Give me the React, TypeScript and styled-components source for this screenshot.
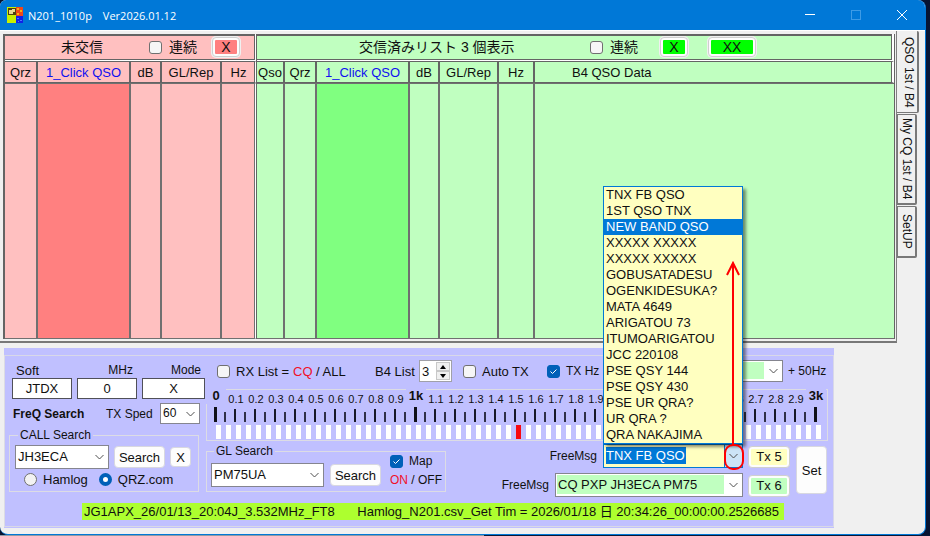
import React, { useState } from "react";
import styled, { createGlobalStyle, css } from "styled-components";

const GlobalStyle = createGlobalStyle`
  * { box-sizing: border-box; }
  html, body { margin: 0; padding: 0; }
  body {
    background: linear-gradient(to right, #8f99a5 0 52%, #0a1836 52%);
    font-family: "Liberation Sans", "Noto Sans CJK JP", sans-serif;
    font-size: 13px;
    color: #101010;
    overflow: hidden;
  }
  button, input, select { font: inherit; color: inherit; margin: 0; }
`;

const Desktop = styled.div`
  background: linear-gradient(to bottom, #071330, #0a2050 50%, #071330);
  padding-right: 4px;
`;

const Window = styled.div`
  background: #f0f0f0;
  border-right: 1px solid #0078d7;
  border-bottom: 1px solid #0078d7;
  border-radius: 6px 8px 8px 8px;
  overflow: hidden;
  padding-bottom: 6px;
`;

const TitleBar = styled.header`
  display: flex;
  align-items: center;
  height: 30px;
  padding-left: 7px;
  background: #0078d7;
  color: #fff;
  font: 11px "Open Sans", sans-serif;
`;

const AppName = styled.h1`
  display: flex;
  gap: 11px;
  margin: 0 0 0 5px;
  font: inherit;
`;

const WindowButtons = styled.div`
  display: flex;
  margin-left: auto;
`;

const WindowButton = styled.button`
  display: grid;
  place-items: center;
  width: 46px;
  height: 28px;
  padding: 0;
  border: 0;
  background: none;
`;

const TabControl = styled.div`
  display: flex;
  align-items: flex-start;
  border-top: 1px solid #fff;
`;

const TabPage = styled.section`
  flex: 1;
  min-width: 0;
  padding: 3px 1px 2px 3px;
  border-right: 1px solid #808080;
  border-bottom: 2px solid #787878;
`;

const Lists = styled.div`
  display: flex;
  border-left: 2px solid #646464;
  border-right: 1px solid #646464;
  background: #fff;
`;

const ListPane = styled.div<{ $width?: string }>`
  flex: ${(p) => (p.$width ? `0 0 ${p.$width}` : "1")};
  min-width: 0;
  border-left: ${(p) => (p.$width ? "0" : "1px solid #646464")};
`;

const ListHead = styled.div<{ $columns: string; $tone: string; $gap: number }>`
  display: grid;
  grid-template-columns: ${(p) => p.$columns};
  align-items: center;
  height: 26px;
  margin-right: ${(p) => p.$gap}px;
  padding-bottom: 1px;
  border: solid #646464;
  border-width: 2px 1px 1px 0;
  background: ${(p) => p.$tone};
  font-size: 14px;
  line-height: 20px;
`;

const ListTitle = styled.h2<{ $inset: number }>`
  margin: 0;
  padding-left: ${(p) => p.$inset}px;
  font-size: 14px;
  font-weight: 400;
  white-space: nowrap;
`;

const ListTable = styled.table`
  width: 100%;
  table-layout: fixed;
  border-collapse: separate;
  border-spacing: 0;
  border-top: 1px solid #fff;
`;

const HeadCell = styled.th<{ $link?: boolean; $tone: string; $gap: number }>`
  height: 22px;
  padding: 0;
  border: solid #646464;
  border-width: 1px 2px 1px 0;
  background: ${(p) => p.$tone};
  font-size: 13px;
  font-weight: 400;
  white-space: nowrap;
  color: ${(p) => (p.$link ? "#1010f0" : "#101010")};
  &:last-child {
    border-right: ${(p) => p.$gap}px solid #fff;
    box-shadow: inset -1px 0 #646464;
  }
`;

const DataHead = styled(HeadCell)`
  padding-left: 37px;
  text-align: left;
`;

const BodyCell = styled.td<{ $fill: string; $edge: boolean }>`
  height: 256px;
  padding: 0;
  border: solid #707070;
  border-width: 1px 2px 1px 0;
  background: ${(p) => p.$fill};
  &:last-child {
    border-right: ${(p) => (p.$edge ? "1px solid #fff" : "0")};
    box-shadow: ${(p) => (p.$edge ? "inset -1px 0 #707070" : "none")};
  }
`;

const FrameButton = styled.button<{ $fill: string; $w: number; $h: number }>`
  width: ${(p) => p.$w}px;
  height: ${(p) => p.$h}px;
  padding: 2px;
  border: 1px solid #cfcfcf;
  border-radius: 4px;
  background: linear-gradient(${(p) => p.$fill}, ${(p) => p.$fill}) content-box, #fdfdfd;
  line-height: 14px;
  white-space: nowrap;
`;

const HeadButton = styled(FrameButton)`
  box-shadow: 0 0 0 1px #f0f0f0;
`;

const TabStrip = styled.nav`
  display: flex;
  flex-direction: column;
  width: 28px;
  gap: 1px;
`;

const Tab = styled.button<{ $active?: boolean; $h: number }>`
  width: ${(p) => (p.$active ? 22 : 20)}px;
  height: ${(p) => p.$h}px;
  padding: ${(p) => (p.$active ? "1px 0 0 3px" : "0 0 0 2px")};
  border: solid #787878;
  border-width: ${(p) => (p.$active ? "0 2px 1px 0" : "1px 2px 2px 1px")};
  border-radius: 0 2px 2px 0;
  background: #f0f0f0;
  writing-mode: vertical-rl;
  font-size: 12px;
  line-height: 16px;
  white-space: nowrap;
`;

const CheckLabel = styled.label<{ $gap?: number; $size?: number }>`
  display: flex;
  align-items: center;
  gap: ${(p) => p.$gap ?? 6}px;
  font-size: ${(p) => p.$size ?? 13}px;
  white-space: nowrap;
`;

const Check = styled.input.attrs({ type: "checkbox" })`
  appearance: none;
  flex: none;
  width: 13px;
  height: 13px;
  border: 1px solid #707070;
  border-radius: 3px;
  background: #f6f6f6;
  &:checked {
    border-color: #0060b8;
    background: #0060b8 url("data:image/svg+xml,%3Csvg xmlns='http://www.w3.org/2000/svg' viewBox='0 0 11 11' fill='none' stroke='white'%3E%3Cpath d='M2.5 5.5l2 2 4-4'/%3E%3C/svg%3E");
  }
`;

const Radio = styled.input.attrs({ type: "radio" })`
  appearance: none;
  flex: none;
  width: 13px;
  height: 13px;
  border: 1px solid #707070;
  border-radius: 50%;
  background: #f3f3f3;
  &:checked {
    border: 4px solid #0060b8;
    background: #fff;
  }
`;

const Panel = styled.section`
  margin: 5px 91px 0 4px;
  padding: 7px 0 1px;
  background: #c0c0ff;
`;

const PanelFrame = styled.div`
  border: 1px solid #d8d8e8;
  border-left-color: #dcdce4;
  padding-bottom: 6px;
`;

const Controls = styled.div`
  display: grid;
  grid-template-columns: 200px minmax(0, 1fr);
`;

const Station = styled.div`
  padding: 7px 6px 0 4px;
`;

const FieldRow = styled.div`
  display: grid;
  grid-template-columns: 60px 60px 63px;
  column-gap: 5px;
  padding-left: 3px;
`;

const Field = styled.label<{ $align?: string; $size?: number }>`
  display: flex;
  flex-direction: column;
  font-size: ${(p) => p.$size ?? 12}px;
  line-height: 15px;
  text-align: ${(p) => p.$align ?? "right"};
  span { padding: 0 4px; }
`;

const TextBox = styled.input`
  width: 100%;
  height: 21px;
  padding: 0;
  border: 1px solid #505058;
  background: #fff;
  font-size: 13px;
  text-align: center;
`;

const SpeedRow = styled.div`
  display: grid;
  grid-template-columns: 93px 54px 40px;
  align-items: center;
  margin: 4px 0;
  padding-left: 4px;
  font-size: 12px;
  white-space: nowrap;
`;

const Group = styled.fieldset<{ $pad: string }>`
  margin: 0;
  min-width: 0;
  padding: ${(p) => p.$pad};
  border: 1px solid #dcdce4;
`;

const Legend = styled.legend`
  margin-left: 3px;
  padding: 0 2px;
  font-size: 12px;
  line-height: 14px;
`;

const Row = styled.div<{ $gap?: number; $pad?: string; $end?: boolean }>`
  display: flex;
  align-items: center;
  justify-content: ${(p) => (p.$end ? "flex-end" : "flex-start")};
  gap: ${(p) => p.$gap ?? 0}px;
  padding: ${(p) => p.$pad ?? "0"};
  white-space: nowrap;
`;

const ComboFrame = styled.span<{ $w?: number; $h: number }>`
  position: relative;
  display: flex;
  flex: ${(p) => (p.$w ? `0 0 ${p.$w}px` : "1")};
  height: ${(p) => p.$h}px;
  min-width: 0;
  border: 1px solid #85858f;
  background: #fff;
  > svg {
    position: absolute;
    right: 3px;
    top: calc(50% - 4px);
    pointer-events: none;
  }
`;

const Select = styled.select<{ $fill?: string; $size?: number }>`
  appearance: none;
  width: 100%;
  height: 100%;
  padding: 1px 18px 2px 1px;
  border: 0;
  border-radius: 0;
  background-color: ${(p) => p.$fill ?? "transparent"};
  background-clip: content-box;
  font-size: ${(p) => p.$size ?? 13}px;
  text-indent: 1px;
`;

const PushButton = styled.button<{ $w: number; $h: number }>`
  flex: none;
  width: ${(p) => p.$w}px;
  height: ${(p) => p.$h}px;
  padding: 0;
  border: 1px solid #d8d8e0;
  border-radius: 4px;
  background: #fdfdfd;
`;

const Operation = styled.div`
  padding: 4px 5px 0 1px;
`;

const OptionBar = styled.div`
  display: grid;
  grid-template-columns: 76px 82px 44px 44px 84px 57px minmax(0, 1fr) 45px;
  align-items: center;
  height: 22px;
  padding-left: 11px;
  font-size: 13px;
  white-space: nowrap;
`;

const SmallLabel = styled.label`
  padding-left: 5px;
  font-size: 12px;
`;

const Accent = styled.span`
  color: #f01028;
`;

const Spinner = styled.span`
  display: flex;
  width: 33px;
  height: 22px;
  border: 1px solid #a0a0a8;
  background: #fff;
  input {
    width: 15px;
    padding: 0 0 0 2px;
    border: 0;
    background: none;
    font-size: 13px;
    appearance: textfield;
  }
  input::-webkit-inner-spin-button { display: none; }
`;

const SpinButtons = styled.span`
  display: grid;
  flex: 1;
  padding: 1px;
  button {
    display: grid;
    place-items: center;
    padding: 0;
    border: 1px solid #c8c8c8;
    background: #f0f0f0;
  }
`;

const Ruler = styled.div`
  margin-top: 7px;
  height: 52px;
  border: 1px solid #dcdce4;
`;

const RulerLabels = styled.div`
  display: grid;
  grid-template-columns: repeat(31, 20px);
  height: 17px;
  margin-left: -1px;
  font-size: 11px;
  line-height: 18px;
  text-align: center;
`;

const RulerLabel = styled.span<{ $major: boolean }>`
  ${(p) =>
    p.$major &&
    css`
      height: 15px;
      margin-top: -1px;
      background: #c0c0ff;
      font-size: 13px;
      font-weight: 700;
      line-height: 14px;
    `}
`;

const RulerScale = styled.svg`
  display: block;
  margin-left: -1px;
`;

const Messages = styled.div`
  display: flex;
  align-items: flex-start;
  margin-top: 3px;
`;

const MapColumn = styled.div`
  height: 24px;
  padding-left: 3px;
`;

const MapToggle = styled.div`
  display: grid;
  gap: 5px;
  margin-top: -9px;
  font-size: 12px;
`;

const FreeMessages = styled.div`
  display: grid;
  flex: 1;
  min-width: 0;
  row-gap: 5px;
  font-size: 12px;
`;

const TxButtons = styled.div`
  display: grid;
  gap: 7px;
  margin: 2px 6px 0 5px;
`;

const SetButton = styled(PushButton)`
  margin: 2px 1px 0 0;
`;

const OpenCombo = styled.div`
  position: relative;
  display: flex;
  align-items: center;
  flex: 0 0 140px;
  height: 24px;
  padding-left: 2px;
  border: 1px solid #0078d7;
  background: #ffffc0;
  input {
    width: 80px;
    height: 17px;
    margin-top: -2px;
    padding: 0;
    border: 0;
    background: #0078d7;
    color: #fff;
    font-size: 13px;
  }
`;

const DropButton = styled.button`
  display: grid;
  place-items: center;
  width: 18px;
  height: 22px;
  margin-left: auto;
  padding: 0;
  border: 0;
  border-left: 1px solid #0078d7;
  background: #cce4f7;
`;

const Options = styled.ul`
  position: absolute;
  z-index: 2;
  left: -1px;
  right: -1px;
  bottom: calc(100% + 1px);
  margin: 0;
  padding: 0;
  border: 1px solid #0078d7;
  background: #ffffc0;
  box-shadow: 3px 3px 3px rgba(0, 0, 0, 0.45);
  list-style: none;
`;

const Option = styled.li<{ $on: boolean }>`
  height: 16px;
  padding-left: 2px;
  font-size: 13px;
  line-height: 16px;
  white-space: nowrap;
  background: ${(p) => (p.$on ? "#0078d7" : "transparent")};
  color: ${(p) => (p.$on ? "#fff" : "#101010")};
`;

const Pointer = styled.svg`
  position: absolute;
  z-index: 3;
  right: -4px;
  bottom: -5px;
  pointer-events: none;
`;

const StatusBar = styled.footer`
  display: flex;
  justify-content: space-between;
  margin: 6px 49px 0 77px;
  padding: 0 5px 0 2px;
  height: 17px;
  background: #adff2f;
  line-height: 17px;
  font-size: 13px;
  white-space: nowrap;
`;

const Chevron = () => (
  <svg width="11" height="8" viewBox="0 0 11 8" fill="none" stroke="#505050">
    <path d="M1.5 2l4 4 4-4" />
  </svg>
);

function Combo({ id, value, w, h, fill, size }: { id: string; value: string; w?: number; h: number; fill?: string; size?: number }) {
  return (
    <ComboFrame $w={w} $h={h}>
      <Select id={id} aria-label={id} $fill={fill} $size={size}>
        <option>{value}</option>
      </Select>
      <Chevron />
    </ComboFrame>
  );
}

type Column = { name: string; width?: number; link?: boolean };

const waitingColumns: Column[] = [
  { name: "Qrz", width: 33 },
  { name: "1_Click QSO", width: 93, link: true },
  { name: "dB", width: 31 },
  { name: "GL/Rep", width: 60 },
  { name: "Hz" },
];

const workedColumns: Column[] = [
  { name: "Qso", width: 28 },
  { name: "Qrz", width: 32 },
  { name: "1_Click QSO", width: 93, link: true },
  { name: "dB", width: 30 },
  { name: "GL/Rep", width: 59 },
  { name: "Hz", width: 36 },
  { name: "B4 QSO Data" },
];

function QsoTable({ columns, tone, accent, gap }: { columns: Column[]; tone: string; accent: string; gap: number }) {
  return (
    <ListTable>
      <colgroup>
        {columns.map((c) => (
          <col key={c.name} width={c.width} />
        ))}
      </colgroup>
      <thead>
        <tr>
          {columns.map((c) => {
            const Cell = c.name === "B4 QSO Data" ? DataHead : HeadCell;
            return <Cell key={c.name} $link={c.link} $tone={tone} $gap={gap}>{c.name}</Cell>;
          })}
        </tr>
      </thead>
      <tbody>
        <tr>
          {columns.map((c) => (
            <BodyCell key={c.name} $fill={c.link ? accent : tone} $edge={gap === 1} />
          ))}
        </tr>
      </tbody>
    </ListTable>
  );
}

const messages = [
  "TNX FB QSO", "1ST QSO TNX", "NEW BAND QSO", "XXXXX XXXXX", "XXXXX XXXXX", "GOBUSATADESU",
  "OGENKIDESUKA?", "MATA 4649", "ARIGATOU 73", "ITUMOARIGATOU", "JCC 220108", "PSE QSY 144",
  "PSE QSY 430", "PSE UR QRA?", "UR QRA ?", "QRA NAKAJIMA",
];

const steps = Array.from({ length: 31 }, (_, i) => i);
const slots = Array.from({ length: 61 }, (_, i) => i);
const stepLabel = (i: number) => (i === 0 ? "0" : i % 10 === 0 ? `${i / 10}k` : (i / 10).toFixed(1));

function FrequencyRuler() {
  return (
    <Ruler>
      <RulerLabels>
        {steps.map((i) => (
          <RulerLabel key={i} $major={i % 10 === 0}>{stepLabel(i)}</RulerLabel>
        ))}
      </RulerLabels>
      <RulerScale width="620" height="33" viewBox="0 0 620 33" shapeRendering="crispEdges">
        {steps.map((i) =>
          i % 10 === 0 ? (
            <rect key={i} x={i * 20 + 8} y="-1" width="3" height="16" fill="#101018" />
          ) : (
            <rect key={i} x={i * 20 + 8} y="2" width="2" height="13" fill="#181828" />
          )
        )}
        {steps.slice(0, 30).map((i) => (
          <rect key={i} x={i * 20 + 18} y="5" width="2" height="10" fill="#303048" />
        ))}
        {slots.map((i) => (
          <rect key={i} x={i * 10 + 10} y="18" width="5" height="14" fill={i === 30 ? "#f80810" : "#fff"} />
        ))}
      </RulerScale>
    </Ruler>
  );
}

export default function App() {
  const [count, setCount] = useState(3);
  const [message, setMessage] = useState("TNX FB QSO");

  return (
    <>
      <GlobalStyle />
      <Desktop>
        <Window>
          <TitleBar>
            <svg width="16" height="16" viewBox="0 0 16 16" shapeRendering="crispEdges">
              <path d="M0 0h9v16H0z" fill="#c8f000" />
              <path d="M9 0h7v9H9z" fill="#f04818" />
              <path d="M9 9h7v7H9z" fill="#1020e8" />
              <path d="M1 1h8v7H1z" fill="#504010" />
              <path d="M2 3h4v4H2zM5 2h3v3H5z" fill="#e8d890" />
              <path d="M10 1h2v2h-2zM13 3h2v2h-2zM10 6h2v2h-2z" fill="#f8b010" />
              <path d="M10 11h2v1h-2zM13 13h2v1h-2zM11 14h1v1h-1z" fill="#5070ff" />
            </svg>
            <AppName>
              <span>N201_1010p</span>
              <span>Ver2026.01.12</span>
            </AppName>
            <WindowButtons>
              <WindowButton aria-label="Minimize">
                <svg width="10" height="10" stroke="#fff"><path d="M0 4.5h10" /></svg>
              </WindowButton>
              <WindowButton aria-label="Maximize" disabled>
                <svg width="10" height="10" fill="none" stroke="#3d9be6"><rect x="0.5" y="0.5" width="9" height="9" /></svg>
              </WindowButton>
              <WindowButton aria-label="Close">
                <svg width="10" height="10" stroke="#fff"><path d="M0 0l10 10M10 0L0 10" /></svg>
              </WindowButton>
            </WindowButtons>
          </TitleBar>

          <TabControl>
            <TabPage>
              <Lists>
                <ListPane $width="251px">
                  <ListHead $columns="144px 63px 1fr" $tone="#ffc0c0" $gap={1}>
                    <ListTitle $inset={56}>未交信</ListTitle>
                    <CheckLabel $gap={7} $size={14}><Check />連続</CheckLabel>
                    <HeadButton $fill="#ff8080" $w={28} $h={20}>X</HeadButton>
                  </ListHead>
                  <QsoTable columns={waitingColumns} tone="#ffc0c0" accent="#ff8080" gap={1} />
                </ListPane>
                <ListPane>
                  <ListHead $columns="333px 70px 48px 1fr" $tone="#c0ffc0" $gap={2}>
                    <ListTitle $inset={102}>交信済みリスト 3 個表示</ListTitle>
                    <CheckLabel $gap={7} $size={14}><Check />連続</CheckLabel>
                    <HeadButton $fill="#00ff00" $w={28} $h={20}>X</HeadButton>
                    <HeadButton $fill="#00ff00" $w={48} $h={20}>XX</HeadButton>
                  </ListHead>
                  <QsoTable columns={workedColumns} tone="#c0ffc0" accent="#80ff80" gap={2} />
                </ListPane>
              </Lists>
            </TabPage>
            <TabStrip>
              <Tab $active $h={82}>QSO 1st / B4</Tab>
              <Tab $h={91}>My CQ 1st / B4</Tab>
              <Tab $h={52}>SetUP</Tab>
            </TabStrip>
          </TabControl>

          <Panel>
            <PanelFrame>
              <Controls>
                <Station>
                  <FieldRow>
                    <Field $align="left" $size={13}><span>Soft</span><TextBox defaultValue="JTDX" /></Field>
                    <Field><span>MHz</span><TextBox defaultValue="0" /></Field>
                    <Field><span>Mode</span><TextBox defaultValue="X" /></Field>
                  </FieldRow>
                  <SpeedRow>
                    <b>FreQ Search</b>
                    <label htmlFor="TX Sped">TX Sped</label>
                    <Combo id="TX Sped" value="60" h={21} size={12} />
                  </SpeedRow>
                  <Group $pad="3px 5px 4px">
                    <Legend>CALL Search</Legend>
                    <Row $gap={5}>
                      <Combo id="Call sign" value="JH3ECA" w={94} h={24} />
                      <PushButton $w={51} $h={22}>Search</PushButton>
                      <PushButton $w={21} $h={20}>X</PushButton>
                    </Row>
                    <Row $gap={11} $pad="3px 0 0 9px">
                      <CheckLabel><Radio name="lookup" />Hamlog</CheckLabel>
                      <CheckLabel><Radio name="lookup" defaultChecked />QRZ.com</CheckLabel>
                    </Row>
                  </Group>
                </Station>

                <Operation>
                  <OptionBar>
                    <CheckLabel><Check />RX List =</CheckLabel>
                    <span><Accent>CQ</Accent> / ALL</span>
                    <label htmlFor="b4">B4 List</label>
                    <Spinner>
                      <input id="b4" type="number" value={count} onChange={(e) => setCount(Number(e.target.value))} />
                      <SpinButtons>
                        <button aria-label="Increase" onClick={() => setCount(count + 1)}>
                          <svg width="6" height="4"><path d="M0 4l3-4 3 4z" /></svg>
                        </button>
                        <button aria-label="Decrease" onClick={() => setCount(count - 1)}>
                          <svg width="6" height="4"><path d="M0 0l3 4 3-4z" /></svg>
                        </button>
                      </SpinButtons>
                    </Spinner>
                    <CheckLabel><Check />Auto TX</CheckLabel>
                    <CheckLabel $size={12}><Check defaultChecked />TX Hz</CheckLabel>
                    <Combo id="TX offset" value="" h={22} fill="#c0ffc0" />
                    <SmallLabel htmlFor="TX offset">+ 50Hz</SmallLabel>
                  </OptionBar>

                  <FrequencyRuler />

                  <Messages>
                    <Group $pad="5px 3px 4px 4px">
                      <Legend>GL Search</Legend>
                      <Row $gap={6}>
                        <Combo id="Grid locator" value="PM75UA" w={113} h={24} />
                        <PushButton $w={51} $h={22}>Search</PushButton>
                        <MapColumn>
                          <MapToggle>
                            <CheckLabel $size={12}><Check defaultChecked />Map</CheckLabel>
                            <span><Accent>ON</Accent> / OFF</span>
                          </MapToggle>
                        </MapColumn>
                      </Row>
                    </Group>
                    <FreeMessages>
                      <Row $gap={6} $end>
                        <label htmlFor="free5">FreeMsg</label>
                        <OpenCombo>
                          <input id="free5" role="combobox" aria-expanded="true" aria-controls="free5-list" value={message} onChange={(e) => setMessage(e.target.value)} />
                          <DropButton aria-label="Show messages"><Chevron /></DropButton>
                          <Options id="free5-list" role="listbox">
                            {messages.map((m, i) => (
                              <Option key={i} role="option" aria-selected={i === 2} $on={i === 2} onClick={() => setMessage(m)}>{m}</Option>
                            ))}
                          </Options>
                          <Pointer width="26" height="214" viewBox="0 0 26 214" fill="none" stroke="#ff0000" strokeWidth="2">
                            <path d="M13 187V6M7 17l6-12 6 12" />
                            <rect x="5" y="187" width="18" height="24" rx="8" />
                          </Pointer>
                        </OpenCombo>
                      </Row>
                      <Row $gap={6} $end>
                        <label htmlFor="Free message 6">FreeMsg</label>
                        <Combo id="Free message 6" value="CQ PXP JH3ECA PM75" w={188} h={24} fill="#c0ffc0" />
                      </Row>
                    </FreeMessages>
                    <TxButtons>
                      <FrameButton $fill="#ffffc0" $w={42} $h={22}>Tx 5</FrameButton>
                      <FrameButton $fill="#c0ffc0" $w={42} $h={22}>Tx 6</FrameButton>
                    </TxButtons>
                    <SetButton $w={31} $h={48}>Set</SetButton>
                  </Messages>
                </Operation>
              </Controls>
              <StatusBar>
                <span>JG1APX_26/01/13_20:04J_3.532MHz_FT8</span>
                <span>Hamlog_N201.csv_Get Tim = 2026/01/18 日 20:34:26_00:00:00.2526685</span>
              </StatusBar>
            </PanelFrame>
          </Panel>
        </Window>
      </Desktop>
    </>
  );
}
